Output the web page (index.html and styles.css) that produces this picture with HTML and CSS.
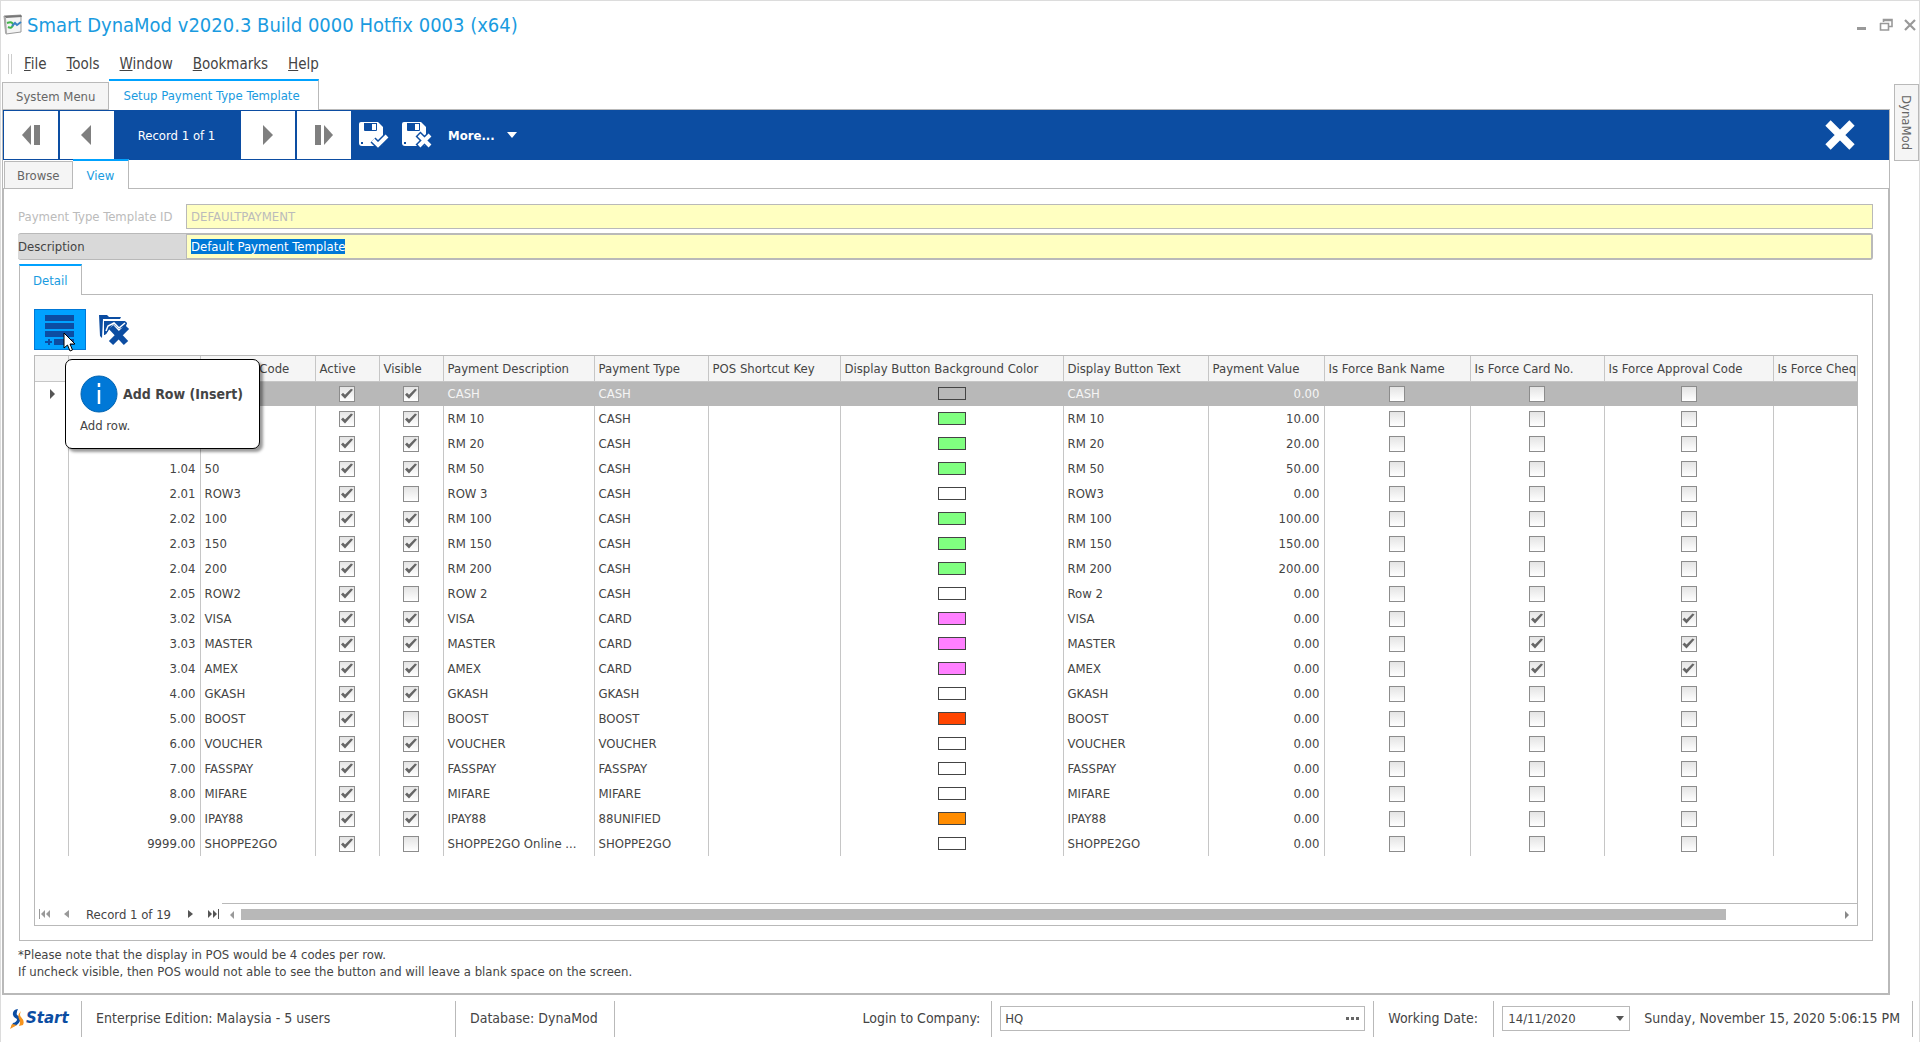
FILE: index.html
```
<!DOCTYPE html>
<html lang="en">
<head>
<meta charset="UTF-8" />
<meta name="viewport" content="width=device-width, initial-scale=1" />
<title>Smart DynaMod</title>
<link rel="stylesheet" href="styles.css">
</head>
<body>
<header class="titlebar">
  <svg class="app-icon" width="20" height="22" viewBox="0 0 20 22">
    <path d="M1 2L18 1L18 18L3 20Z" fill="#f4f4f4" stroke="#999" />
    <path d="M1 2L18 1L19 3L3 4Z" fill="#777" />
    <path d="M1 2L3 4L4 20L2 19Z" fill="#aaa" />
    <path d="M4 9Q10 7 10 11Q9 15 5 13" fill="none" stroke="#3fb54a" stroke-width="2" />
    <path d="M9 12L12 9L14 11L18 8" fill="none" stroke="#3b84c4" stroke-width="2" />
  </svg>
  <h1>Smart DynaMod v2020.3 Build 0000 Hotfix 0003 (x64)</h1>
  <div class="window-buttons">
    <button aria-label="Minimize"><svg width="14" height="14"><path d="M2 10.500H11" stroke="#999" stroke-width="3" /></svg></button>
    <button aria-label="Restore"><svg width="14" height="14"><path d="M4.500 4V1.500H13V8.500H9.500M4 2.500H13M1 5.500H9.500V12H1.500V5" fill="none" stroke="#999" stroke-width="1.600" /></svg></button>
    <button aria-label="Close"><svg width="14" height="14"><path d="M2 2L12 12M12 2L2 12" stroke="#999" stroke-width="2.200" /></svg></button>
  </div>
</header>

<nav class="menubar">
  <span class="grip"></span>
  <button><u>F</u>ile</button>
  <button><u>T</u>ools</button>
  <button><u>W</u>indow</button>
  <button><u>B</u>ookmarks</button>
  <button><u>H</u>elp</button>
</nav>

<div class="workspace">
  <main class="document">
    <div class="tabs main-tabs">
      <button class="tab">System Menu</button>
      <button class="tab active">Setup Payment Type Template</button>
    </div>

    <div class="frame">
      <div class="toolbar">
        <button class="nav-btn" aria-label="First record"><svg width="20" height="20"><path d="M10 0V20L1 10Z" /><path d="M13 0H19V20H13Z" /></svg></button>
        <button class="nav-btn" aria-label="Previous record"><svg width="20" height="20"><path d="M14 0V20L4 10Z" /></svg></button>
        <span class="record">Record 1 of 1</span>
        <button class="nav-btn" aria-label="Next record"><svg width="20" height="20"><path d="M5 0V20L15 10Z" /></svg></button>
        <button class="nav-btn" aria-label="Last record"><svg width="20" height="20"><path d="M1 0H7V20H1Z" /><path d="M10 0V20L19 10Z" /></svg></button>
        <button class="tool-btn" aria-label="Save">
          <svg width="32" height="28" viewBox="0 0 32 28">
            <path d="M3 1H20L25 6V22Q25 25 22 25H4Q1 25 1 22V3Q1 1 3 1Z" fill="#fff" />
            <path d="M6 2H19V9Q19 10 18 10H7Q6 10 6 9Z" fill="#0c4da2" /><path d="M14 3H18V9H14Z" fill="#fff" />
            <path d="M3 21H5V23H3Z" fill="#0c4da2" />
            <path d="M15 19L20 24L29 15" fill="none" stroke="#0c4da2" stroke-width="7" />
            <path d="M15 19L20 24L29 15" fill="none" stroke="#fff" stroke-width="4" />
          </svg>
        </button>
        <button class="tool-btn" aria-label="Cancel">
          <svg width="32" height="28" viewBox="0 0 32 28">
            <path d="M3 1H20L25 6V22Q25 25 22 25H4Q1 25 1 22V3Q1 1 3 1Z" fill="#fff" />
            <path d="M6 2H19V9Q19 10 18 10H7Q6 10 6 9Z" fill="#0c4da2" /><path d="M14 3H18V9H14Z" fill="#fff" />
            <path d="M3 21H5V23H3Z" fill="#0c4da2" />
            <path d="M17 13L30 26M30 13L17 26" stroke="#0c4da2" stroke-width="7" />
            <path d="M18 14L29 25M29 14L18 25" stroke="#fff" stroke-width="4" />
          </svg>
        </button>
        <button class="more">More... <svg width="10" height="6"><path d="M0 0H10L5 6Z" fill="#fff" /></svg></button>
        <button class="close-doc" aria-label="Close document"><svg width="30" height="30"><path d="M3 3L27 27M27 3L3 27" stroke="#fff" stroke-width="7.500" /></svg></button>
      </div>

      <div class="tabs sub">
        <button class="tab">Browse</button>
        <button class="tab active">View</button>
      </div>

      <div class="view">
        <div class="field disabled">
          <label for="templateId">Payment Type Template ID</label>
          <input type="text" id="templateId" value="DEFAULTPAYMENT" disabled />
        </div>
        <div class="field current">
          <label for="description">Description</label>
          <input type="text" id="description" value="Default Payment Template" />
        </div>

        <div class="detail">
          <div class="tabs detail-tabs">
            <button class="tab active">Detail</button>
          </div>
          <div class="detail-body">
            <div class="grid-tools">
              <button class="grid-btn hover" aria-label="Add Row" aria-describedby="addRowTip">
                <svg width="30" height="30">
                  <path d="M0 0H29V6H0ZM0 8H29V14H0ZM0 16H29V22H0ZM9 24H29V30H9ZM0 26H3V24H5V26H7V28H5V30H3V28H0Z" fill="#0c4da2" />
                </svg>
              </button>
              <button class="grid-btn" aria-label="Delete Row">
                <svg width="32" height="32" viewBox="0 0 32 32">
                  <path d="M1 1L2 22L4 24L5 5H22L23 3H11L9 1Z" fill="#0c4da2" />
                  <path d="M6 7H23L29 9L28 12L21 15L15 10L8 20L6 21Z" fill="#0c4da2" />
                  <path d="M12 12L29 30M30 12L12 30" stroke="#fff" stroke-width="9" />
                  <path d="M6 7H27L29 9L28 12L21 15L15 10L8 20L6 21Z" fill="#0c4da2" />
                  <path d="M8 17L10 12L16 9L21 14L27 9" fill="none" stroke="#fff" stroke-width="1.500" />
                  <path d="M13 13L28 29M29 13L13 29" stroke="#0c4da2" stroke-width="6" />
                </svg>
              </button>
              <svg class="cursor" width="14" height="20" viewBox="0 0 14 20"><path d="M1 1V16L4.500 13L7 19L9.500 18L7 12H12Z" fill="#fff" stroke="#000" /></svg>
              <div class="tooltip" id="addRowTip" role="tooltip">
                <div class="tooltip-title">
                  <svg width="38" height="38"><circle cx="19" cy="19" r="18" fill="#0078d7" stroke="#0063b1" /><path d="M19 15V29M19 8V12" stroke="#fff" stroke-width="2.500" /></svg>
                  <strong>Add Row (Insert)</strong>
                </div>
                <p>Add row.</p>
              </div>
            </div>

            <div class="grid">
              <div class="grid-scroll">
                <table>
                  <colgroup>
                    <col class="w-gutter"><col class="w-pos"><col class="w-code"><col class="w-flag"><col class="w-flag">
                    <col class="w-desc"><col class="w-type"><col class="w-key"><col class="w-color"><col class="w-text">
                    <col class="w-value"><col class="w-bank"><col class="w-card"><col class="w-approval"><col class="w-cheque">
                  </colgroup>
                  <thead>
                    <tr>
                      <th></th><th></th><th>Payment Code</th><th>Active</th><th>Visible</th>
                      <th>Payment Description</th><th>Payment Type</th><th>POS Shortcut Key</th>
                      <th>Display Button Background Color</th><th>Display Button Text</th><th>Payment Value</th>
                      <th>Is Force Bank Name</th><th>Is Force Card No.</th><th>Is Force Approval Code</th><th>Is Force Cheque No.</th>
                    </tr>
                  </thead>
                  <tbody id="rows"></tbody>
                </table>
              </div>
              <div class="grid-nav">
                <button aria-label="First row"><svg width="12" height="10"><path d="M0 0H1V10H0ZM6 1V9L2 5ZM11 1V9L7 5Z" fill="#999" /></svg></button>
                <button aria-label="Previous row"><svg width="6" height="10"><path d="M5 1V9L0 5Z" fill="#999" /></svg></button>
                <span>Record 1 of 19</span>
                <button aria-label="Next row"><svg width="6" height="10"><path d="M0 1V9L5 5Z" fill="#555" /></svg></button>
                <button aria-label="Last row"><svg width="12" height="10"><path d="M11 0H12V10H11ZM1 1V9L5 5ZM6 1V9L10 5Z" fill="#555" /></svg></button>
                <div class="scrollbar">
                  <button aria-label="Scroll left"><svg width="4" height="8"><path d="M4 0V8L0 4Z" fill="#999" /></svg></button>
                  <div class="track"><div class="thumb"></div></div>
                  <button aria-label="Scroll right"><svg width="4" height="8"><path d="M0 0V8L4 4Z" fill="#888" /></svg></button>
                </div>
              </div>
            </div>
          </div>
        </div>

        <p class="note">*Please note that the display in POS would be 4 codes per row.<br>If uncheck visible, then POS would not able to see the button and will leave a blank space on the screen.</p>
      </div>
    </div>
  </main>
  <aside><button class="side-tab">DynaMod</button></aside>
</div>

<footer class="statusbar">
  <div class="logo">
    <svg width="16" height="22" viewBox="0 0 16 22">
      <path d="M8 1Q2 2 3 7Q4 10 7 11Q7 14 3 15L1 19Q8 18 10 13Q11 9 7 7Q6 5 8 1Z" fill="#0c4da2" />
      <path d="M11 3Q9 7 11 9Q15 13 13 17L9 18Q11 14 9 11Q7 7 11 3ZM0 21L2 16L7 17Z" fill="#f7941d" />
    </svg>
    <b>Start</b>
  </div>
  <span class="cell edition">Enterprise Edition: Malaysia - 5 users</span>
  <span class="cell database">Database: DynaMod</span>
  <label class="cell company-label" for="company">Login to Company:</label>
  <div class="cell company">
    <div class="lookup">
      <input type="text" id="company" value="HQ" />
      <button aria-label="Choose company"><svg width="14" height="3"><path d="M0 0H3V3H0ZM5 0H8V3H5ZM10 0H13V3H10Z" fill="#666" /></svg></button>
    </div>
  </div>
  <label class="cell date-label" for="workDate">Working Date:</label>
  <div class="cell date">
    <div class="select">
      <select id="workDate"><option>14/11/2020</option></select>
      <svg width="8" height="6"><path d="M0 0H8L4 5Z" fill="#555" /></svg>
    </div>
    <span>Sunday, November 15, 2020 5:06:15 PM</span>
  </div>
  <span class="cell end"></span>
</footer>

<script>
  // position, code, active, visible, description, type, button color, button text, value, card payment
  const payments = [
    ["", "", 1, 1, "CASH", "CASH", "", "CASH", "0.00", 0],
    ["1.02", "10", 1, 1, "RM 10", "CASH", "green", "RM 10", "10.00", 0],
    ["1.03", "20", 1, 1, "RM 20", "CASH", "green", "RM 20", "20.00", 0],
    ["1.04", "50", 1, 1, "RM 50", "CASH", "green", "RM 50", "50.00", 0],
    ["2.01", "ROW3", 1, 0, "ROW 3", "CASH", "", "ROW3", "0.00", 0],
    ["2.02", "100", 1, 1, "RM 100", "CASH", "green", "RM 100", "100.00", 0],
    ["2.03", "150", 1, 1, "RM 150", "CASH", "green", "RM 150", "150.00", 0],
    ["2.04", "200", 1, 1, "RM 200", "CASH", "green", "RM 200", "200.00", 0],
    ["2.05", "ROW2", 1, 0, "ROW 2", "CASH", "", "Row 2", "0.00", 0],
    ["3.02", "VISA", 1, 1, "VISA", "CARD", "pink", "VISA", "0.00", 1],
    ["3.03", "MASTER", 1, 1, "MASTER", "CARD", "pink", "MASTER", "0.00", 1],
    ["3.04", "AMEX", 1, 1, "AMEX", "CARD", "pink", "AMEX", "0.00", 1],
    ["4.00", "GKASH", 1, 1, "GKASH", "GKASH", "", "GKASH", "0.00", 0],
    ["5.00", "BOOST", 1, 0, "BOOST", "BOOST", "red", "BOOST", "0.00", 0],
    ["6.00", "VOUCHER", 1, 1, "VOUCHER", "VOUCHER", "", "VOUCHER", "0.00", 0],
    ["7.00", "FASSPAY", 1, 1, "FASSPAY", "FASSPAY", "", "FASSPAY", "0.00", 0],
    ["8.00", "MIFARE", 1, 1, "MIFARE", "MIFARE", "", "MIFARE", "0.00", 0],
    ["9.00", "IPAY88", 1, 1, "IPAY88", "88UNIFIED", "orange", "IPAY88", "0.00", 0],
    ["9999.00", "SHOPPE2GO", 1, 0, "SHOPPE2GO Online ...", "SHOPPE2GO", "", "SHOPPE2GO", "0.00", 0],
  ];

  function check(label, on) {
    return `<td class="center"><input type="checkbox" aria-label="${label}" ${on ? "checked" : ""}></td>`;
  }

  document.getElementById("rows").innerHTML = payments.map((p, i) => `
    <tr class="${i === 0 ? "selected" : ""}">
      <td class="gutter">${i === 0 ? '<svg width="6" height="10"><path d="M0 0V10L5 5Z" fill="#555" /></svg>' : ""}</td>
      <td class="num">${p[0]}</td>
      <td>${p[1]}</td>
      ${check("Active", p[2])}
      ${check("Visible", p[3])}
      <td>${p[4]}</td>
      <td>${p[5]}</td>
      <td></td>
      <td class="center"><span class="swatch ${p[6]}"></span></td>
      <td>${p[7]}</td>
      <td class="num">${p[8]}</td>
      ${check("Is Force Bank Name", 0)}
      ${check("Is Force Card No.", p[9])}
      ${check("Is Force Approval Code", p[9])}
      <td></td>
    </tr>`).join("");

  const description = document.getElementById("description");
  description.focus();
  description.select();
</script>
</body>
</html>
```
FILE: styles.css
```
:root {
  --blue: #0c4da2;
  --accent: #00a2ff;
  --link: #1a9be0;
  --line: #b9b9b9;
  --text: #444;
  --field: #ffffc1;
}
* {
  box-sizing: border-box;
}
body {
  margin: 0;
  height: 100vh;
  display: flex;
  flex-direction: column;
  font-family: "DejaVu Sans Condensed", "Noto Sans", sans-serif;
  font-size: 13px;
  line-height: 17px;
  color: var(--text);
  background: #fff;
  border: 1px solid #dcdcdc;
  border-bottom: none;
  overflow: hidden;
}
button, input, select {
  font: inherit;
  color: inherit;
  margin: 0;
  padding: 0;
  border: none;
  background: none;
}
input:focus {
  outline: none;
}
svg {
  display: block;
}
p {
  margin: 0;
}

/* Title and menu */
.titlebar {
  display: flex;
  align-items: center;
  height: 48px;
  padding: 0 2px;
}
h1 {
  margin: 0 0 0 4px;
  font-size: 20px;
  line-height: 24px;
  font-weight: normal;
  color: var(--link);
}
.window-buttons {
  display: flex;
  gap: 10px;
  margin-left: auto;
}
.menubar {
  display: flex;
  align-items: center;
  height: 30px;
  padding-left: 7px;
  font-size: 15px;
}
.menubar button {
  padding: 0 10px;
}
.grip {
  width: 4px;
  height: 20px;
  margin-right: 2px;
  border: solid #ccc;
  border-width: 0 1px;
}

/* Tabs */
.workspace {
  flex: 1;
  display: flex;
  gap: 4px;
  min-height: 0;
}
.document {
  flex: 1;
  min-width: 0;
  display: flex;
  flex-direction: column;
  padding-left: 1px;
}
.tabs {
  display: flex;
  align-items: flex-end;
  height: 30px;
}
.tab {
  height: 27px;
  padding: 0 13px;
  color: #666;
  background: #f5f5f5;
  border: 1px solid var(--line);
  border-bottom: none;
}
.tab.active {
  height: 31px;
  margin-bottom: -1px;
  color: var(--link);
  background: #fff;
  border-top: 2px solid var(--accent);
  border-left: none;
  position: relative;
}
.main-tabs .active {
  padding: 0 18px 0 14px;
}
.tabs.sub {
  height: 28px;
  padding-left: 1px;
}
.sub .tab {
  padding: 0 12px;
}
.sub .tab.active {
  height: 30px;
  padding: 0 14px;
}
.side-tab {
  writing-mode: vertical-rl;
  width: 25px;
  height: 77px;
  margin-top: 5px;
  color: #666;
  background: #f5f5f5;
  border: 1px solid var(--line);
}

/* Record toolbar */
.frame {
  flex: 1;
  min-height: 0;
  display: flex;
  flex-direction: column;
  border: 1px solid var(--line);
}
.toolbar {
  display: flex;
  align-items: center;
  height: 50px;
  padding-left: 1px;
  color: #fff;
  background: var(--blue);
}
.nav-btn {
  display: flex;
  align-items: center;
  justify-content: center;
  width: 54px;
  height: 48px;
  margin-right: 2px;
  background: #fff;
  fill: #7f7f7f;
}
.record {
  width: 125px;
  padding-right: 4px;
  text-align: center;
}
.tool-btn {
  margin-left: 5px;
  margin-right: 6px;
}
.more {
  display: flex;
  align-items: center;
  gap: 12px;
  margin-left: 9px;
  font-weight: bold;
}
.close-doc {
  margin: 0 34px 0 auto;
}

/* View */
.view {
  flex: 1;
  min-height: 0;
  display: flex;
  flex-direction: column;
  padding: 15px 15px 0 14px;
  border: 1px solid var(--line);
}
.field {
  display: flex;
  align-items: center;
}
.field label {
  width: 168px;
  flex: none;
}
.field input {
  flex: 1;
  min-width: 0;
  height: 25px;
  padding: 0 4px;
  background: var(--field);
  border: 1px solid var(--line);
}
.disabled, .disabled input {
  color: #bbb;
}
.disabled {
  margin-bottom: 4px;
}
.current {
  background: #d9d9d9;
  border: 1px solid var(--line);
  border-width: 1px 1px 1px 0;
  border-radius: 3px;
}
#description::selection {
  color: #fff;
  background: #0078d7;
}
.detail {
  flex: 1;
  min-height: 0;
  display: flex;
  flex-direction: column;
  margin-left: 1px;
  padding-top: 4px;
}
.detail-tabs .tab {
  padding: 0 14px 0 13px;
  border-left: 1px solid var(--line);
}
.detail-body {
  flex: 1;
  min-height: 0;
  display: flex;
  flex-direction: column;
  padding: 14px;
  border: 1px solid var(--line);
}
.grid-tools {
  display: flex;
  gap: 2px;
  margin-bottom: 5px;
  position: relative;
}
.grid-btn {
  display: flex;
  align-items: center;
  justify-content: center;
  width: 52px;
  height: 41px;
}
.grid-btn.hover {
  background: var(--accent);
  border: 1px solid #0078d7;
}
.cursor {
  position: absolute;
  left: 29px;
  top: 23px;
  z-index: 3;
}
.tooltip {
  position: absolute;
  left: 31px;
  top: 50px;
  z-index: 2;
  width: 195px;
  height: 90px;
  padding: 15px 14px;
  background: #fff;
  border: 1px solid #000;
  border-radius: 7px;
  box-shadow: 3px 3px 3px rgba(0, 0, 0, 0.4);
}
.tooltip-title {
  display: flex;
  align-items: center;
  gap: 5px;
  margin-bottom: 4px;
  font-size: 14px;
  white-space: nowrap;
}

/* Grid */
.grid {
  flex: 1;
  min-height: 0;
  display: flex;
  flex-direction: column;
  border: 1px solid var(--line);
}
.grid-scroll {
  flex: 1;
  min-height: 0;
  overflow: hidden;
}
table {
  width: 1900px;
  table-layout: fixed;
  border-collapse: collapse;
}
th, td {
  height: 25px;
  padding: 0 4px;
  border-right: 1px solid #c6c6c6;
  text-align: left;
  font-weight: normal;
  white-space: nowrap;
  overflow: hidden;
  text-overflow: ellipsis;
}
th {
  background: #f5f5f5;
  border-bottom: 1px solid #c6c6c6;
}
.selected td {
  color: #f5f5f5;
  background: #b8b8b8;
  border-right-color: #b8b8b8;
}
.selected .gutter {
  background: #fff;
  border-right-color: #c6c6c6;
}
.gutter {
  padding-left: 15px;
}
.num {
  text-align: right;
}
.center {
  text-align: center;
}
.w-gutter { width: 33px; }
.w-pos { width: 132px; }
.w-code { width: 115px; }
.w-flag { width: 64px; }
.w-desc { width: 151px; }
.w-type { width: 114px; }
.w-key { width: 132px; }
.w-color { width: 223px; }
.w-text { width: 145px; }
.w-value { width: 116px; }
.w-bank { width: 146px; }
.w-card { width: 134px; }
.w-approval { width: 169px; }
.swatch {
  display: block;
  width: 28px;
  height: 13px;
  margin: 0 auto;
  border: 1px solid #444;
}
.swatch.green { background: #80ff80; }
.swatch.pink { background: #ff80ff; }
.swatch.red { background: #ff4500; }
.swatch.orange { background: #ff8c00; }
td input {
  appearance: none;
  display: block;
  width: 16px;
  height: 16px;
  margin: 0 auto;
  border: 1px solid #8c8c8c;
  background: linear-gradient(#e4e4e4, #fff);
}
td input:checked::before {
  content: "";
  display: block;
  height: 14px;
  background: #666;
  clip-path: polygon(1px 8px, 3px 6px, 5px 8px, 11px 2px, 13px 3px, 5px 12px);
}
.grid-nav {
  display: flex;
  align-items: center;
  height: 22px;
  padding-left: 4px;
  gap: 13px;
}
.grid-nav span {
  margin: 0 4px 0 3px;
}
.scrollbar {
  flex: 1;
  display: flex;
  align-items: center;
  gap: 7px;
  align-self: stretch;
  margin-left: -10px;
  padding: 0 8px;
  border-top: 1px solid var(--line);
}
.track {
  flex: 1;
}
.thumb {
  width: 93%;
  height: 11px;
  background: #b8b8b8;
}
.note {
  height: 52px;
  padding-top: 5px;
}

/* Status bar */
.statusbar {
  display: flex;
  align-items: center;
  height: 47px;
  padding-left: 9px;
  font-size: 14px;
}
.logo {
  display: flex;
  align-items: center;
  width: 71px;
  color: var(--blue);
  font-family: "DejaVu Sans", sans-serif;
  font-size: 15px;
  font-style: italic;
}
.cell {
  display: flex;
  align-items: center;
  height: 36px;
  padding: 0 11px 0 14px;
  border-left: 1px solid var(--line);
  white-space: nowrap;
}
.edition {
  width: 374px;
}
.database {
  width: 159px;
}
.company-label {
  flex: 1;
  justify-content: flex-end;
}
.company, .date {
  padding: 0 8px;
}
.date-label {
  width: 120px;
}
.date {
  padding-right: 12px;
}
.lookup, .select {
  display: flex;
  align-items: center;
  height: 25px;
  border: 1px solid var(--line);
  padding: 0 4px;
  font-size: 13px;
}
.lookup {
  width: 365px;
}
.lookup input {
  flex: 1;
  min-width: 0;
}
.select {
  width: 128px;
  padding: 0 5px;
  margin-right: 14px;
}
.select select {
  flex: 1;
  appearance: none;
}
.end {
  width: 7px;
  padding: 0;
}
```
